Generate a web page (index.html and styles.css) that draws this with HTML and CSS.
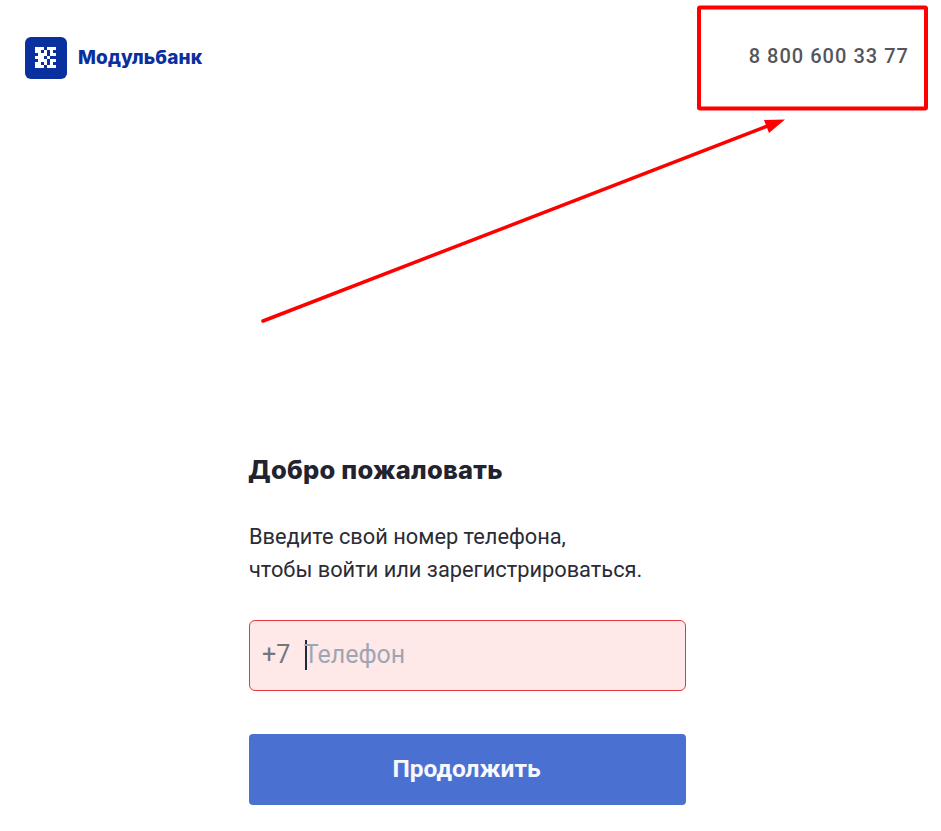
FILE: index.html
```html
<!DOCTYPE html>
<html lang="ru">
<head>
<meta charset="utf-8">
<title>Модульбанк</title>
<link rel="stylesheet" href="styles.css">
</head>
<body>
<div class="page">
  <header class="header">
    <a class="brand">
      <svg class="brand-icon" viewBox="0 0 42 42" width="42" height="42">
        <rect width="42" height="42" rx="6" fill="#0a2f9e"/>
        <path fill="#fff" d="M10 10h9v3h-3v3h-6zM22 10h9v3h-3v3h3v3h-3v-3h-3v-3h-3zM19 13h3v3h-3zM13 16h9v3h-9zM28 19h-3v-3h3zM10 19h9v3h-9zM22 19h3v3h3v3h-3v-3h-3zM31 19h0v6h-3v-3h3zM13 22h9v3h-9zM10 25h6v3h-6zM19 25h3v3h-3zM25 25h3v3h-3zM10 28h9v3h-9zM22 28h9v3h-9z"/>
      </svg>
      <span class="brand-name">Модульбанк</span>
    </a>
    <span class="phone">8 800 600 33 77</span>
  </header>
  <main class="form">
    <h1 class="title">Добро пожаловать</h1>
    <p class="lead">Введите свой номер телефона,<br>чтобы войти или зарегистрироваться.</p>
    <div class="field">
      <span class="prefix">+7</span>
      <span class="caret"></span>
      <span class="placeholder">Телефон</span>
    </div>
    <button class="submit" type="button">Продолжить</button>
  </main>
  <svg class="annotation" viewBox="0 0 941 831" width="941" height="831">
    <rect x="699" y="7.500" width="227" height="101" rx="1" fill="none" stroke="#fe0000" stroke-width="4"/>
    <path d="M263 321L770 125" fill="none" stroke="#fe0000" stroke-width="3.500" stroke-linecap="round"/>
    <path d="M785 119.500L764 120L769 133Z" fill="#fe0000"/>
  </svg>
</div>
</body>
</html>
```

FILE: styles.css
```css
* { box-sizing: border-box; }
html, body { margin: 0; padding: 0; background: #fff; }
.page {
  position: relative;
  width: 941px;
  height: 831px;
  overflow: hidden;
  font-family: Roboto, "Liberation Sans", sans-serif;
  color: #23232f;
}
.header {
  display: flex;
  align-items: center;
  justify-content: space-between;
  height: 115px;
  padding: 0 32px 0 25px;
}
.brand { display: flex; align-items: center; gap: 11px; }
.brand-icon { display: block; }
.brand-name {
  font-family: Inter, "Noto Sans", sans-serif;
  font-size: 19px;
  font-weight: 800;
  letter-spacing: 0.1px;
  color: #0a2f9e;
}
.phone {
  position: relative;
  top: -2px;
  font-size: 20px;
  font-weight: 500;
  letter-spacing: 1.030px;
  color: #54565c;
}
.form {
  width: 437px;
  margin-left: 249px;
  padding-top: 339px;
}
.title {
  margin: 0 0 0 -1px;
  font-family: Inter, "Noto Sans", sans-serif;
  font-size: 25.500px;
  line-height: 32px;
  font-weight: 800;
  letter-spacing: 0.25px;
  color: #23232f;
}
.lead {
  margin: 34px 0 0;
  font-size: 21.800px;
  line-height: 33px;
  color: #2b2b35;
}
.field {
  display: flex;
  align-items: center;
  height: 71px;
  margin-top: 34px;
  padding: 0 12px 2px;
  background: #ffe8e8;
  border: 1px solid #e8353c;
  border-radius: 6px;
  font-size: 25px;
}
.prefix { color: #73767c; }
.caret {
  width: 1.500px;
  height: 30px;
  margin: 0 -3px 0 15px;
  background: #1f2a3a;
}
.placeholder { color: #9ea6b4; }
.submit {
  display: block;
  width: 100%;
  height: 71px;
  margin-top: 43px;
  padding: 0 2px 2px 0;
  border: 0;
  border-radius: 4px;
  background: #4a71d1;
  color: #f7f9ff;
  font-family: Roboto, "Liberation Sans", sans-serif;
  font-size: 24.500px;
  font-weight: 700;
}
.annotation {
  position: absolute;
  top: 0;
  left: 0;
  pointer-events: none;
}
```
